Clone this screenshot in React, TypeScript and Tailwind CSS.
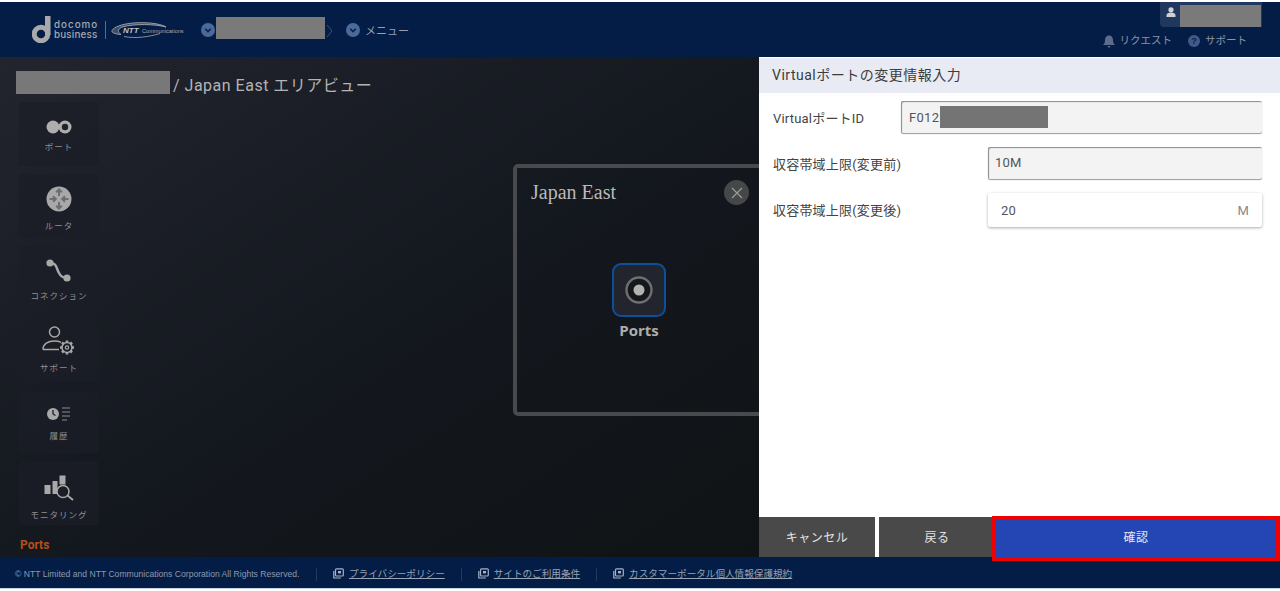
import React from "react";

const jp = "font-['Roboto','Noto_Sans_CJK_JP',sans-serif]";

function Check({ className = "" }: { className?: string }) {
  return (
    <svg viewBox="0 0 14 14" className={`w-[14px] h-[14px] shrink-0 ${className}`}>
      <circle cx="7" cy="7" r="7" fill="#4a6a9a" />
      <path d="M4.2 5.8 7 8.6l2.8-2.8" fill="none" stroke="#0b2148" strokeWidth="1.6" />
    </svg>
  );
}

function ExtIcon() {
  return (
    <svg viewBox="0 0 11 11" className="w-[11px] h-[11px] shrink-0">
      <rect x="2.5" y="0.8" width="7.8" height="7.2" rx="1" fill="none" stroke="#a9b1bf" strokeWidth="1.2" />
      <path d="M0.8 3v7h7" fill="none" stroke="#a9b1bf" strokeWidth="1.2" />
      <rect x="5" y="3" width="3" height="2.4" fill="#a9b1bf" />
    </svg>
  );
}

function Card({ h, mb, icon, label, iconTop, labelMb }: { h: number; mb: number; icon: React.ReactNode; label: string; iconTop: number; labelMb: number }) {
  return (
    <div
      className="w-[80px] rounded-[3px] bg-[#1b1e26]/70 flex flex-col items-center"
      style={{ height: h, marginBottom: mb, paddingTop: iconTop }}
    >
      {icon}
      <span className="mt-auto text-[8.5px] leading-[12px] tracking-[1px] text-[#8e9094] whitespace-nowrap" style={{ marginBottom: labelMb }}>{label}</span>
    </div>
  );
}

const PortIcon = (
  <svg viewBox="0 0 26 14" className="w-[26px] h-[14px]">
    <circle cx="7" cy="7" r="6.5" fill="#aeaeae" />
    <circle cx="19" cy="7" r="6.5" fill="#aeaeae" />
    <circle cx="19" cy="7" r="3.2" fill="#20232b" />
  </svg>
);
const RouterIcon = (
  <svg viewBox="0 0 26 26" className="w-[26px] h-[26px]">
    <circle cx="13" cy="13" r="12.5" fill="#a8a8a8" />
    <g fill="none" stroke="#6b6d71" strokeWidth="2">
      <path d="M13 3.500v6.500M10.200 6.300 13 3.500l2.800 2.800" />
      <path d="M13 22.500V16M10.200 19.700 13 22.500l2.800-2.800" />
      <path d="M3.500 13H10M7 10.200 9.800 13 7 15.800" />
      <path d="M22.500 13H16M19 10.200 16.200 13l2.800 2.800" />
    </g>
  </svg>
);
const ConnIcon = (
  <svg viewBox="0 0 26 24" className="w-[26px] h-[24px]">
    <path d="M4 4c7 0 6 5 9 10 2 4 4 5 8 5" fill="none" stroke="#a8a8a8" strokeWidth="2.4" />
    <circle cx="4" cy="4" r="3.6" fill="#a8a8a8" />
    <circle cx="21" cy="19" r="3.6" fill="#a8a8a8" />
  </svg>
);
const SupportIcon = (
  <svg viewBox="0 0 34 30" className="w-[34px] h-[30px]">
    <g fill="none" stroke="#a8a8a8" strokeWidth="1.5">
      <circle cx="12.500" cy="6" r="5" />
      <path d="M1 23.500c0-5.500 5-8.500 11.500-8.500 2.500 0 4.800.4 6.500 1.300M1 23.500h16" />
      <circle cx="25" cy="21.500" r="5" strokeWidth="1.500" />
      <circle cx="25" cy="21.500" r="1.700" strokeWidth="1.200" />
      <path d="M25 14.500v2.200M25 26.300v2.200M18 21.500h2.200M29.800 21.500H32M20 16.500l1.600 1.600M28.400 24.900l1.600 1.600M20 26.500l1.600-1.600M28.400 18.100l1.600-1.600" strokeWidth="2.600" />
    </g>
  </svg>
);
const HistoryIcon = (
  <svg viewBox="0 0 24 14" className="w-[24px] h-[14px]">
    <circle cx="6" cy="7" r="6" fill="#a8a8a8" />
    <path d="M6 3v4l2.500 1.500" fill="none" stroke="#1b1e26" strokeWidth="1.300" />
    <path d="M15 1h8M15 5h8M15 9h8M15 13h5" stroke="#8d8d8d" strokeWidth="1" />
  </svg>
);
const MonitorIcon = (
  <svg viewBox="0 0 30 26" className="w-[30px] h-[26px]">
    <rect x="0.500" y="10" width="6" height="9" fill="#a8a8a8" />
    <rect x="8.500" y="6" width="5" height="13" fill="#a8a8a8" />
    <rect x="15.500" y="0.500" width="6" height="9" fill="#a8a8a8" />
    <circle cx="19" cy="16.500" r="6" fill="#1b1e26" stroke="#a8a8a8" strokeWidth="1.500" />
    <path d="m23.500 20.500 5.500 4.500" stroke="#a8a8a8" strokeWidth="1.800" />
  </svg>
);

export default function App() {
  return (
    <div className={`relative w-[1280px] h-[591px] overflow-hidden bg-white flex flex-col pt-[2px] ${jp}`}>
      {/* header */}
      <header className="h-[55px] shrink-0 bg-[#031d47] flex items-start relative">
        <div className="flex items-center pl-[32px] pt-[14px] h-[41px]">
          <svg viewBox="0 0 20 27" className="w-[20px] h-[27px]">
            <rect x="13" y="0" width="5.500" height="19" fill="#a9a9a9" />
            <circle cx="9" cy="18" r="6.800" fill="none" stroke="#a9a9a9" strokeWidth="5" />
          </svg>
          <div className="ml-[2px] w-[44px] flex flex-col font-['Inter',sans-serif] text-[9.800px] leading-[10px] font-medium text-[#a9a9a9]">
            <span className="tracking-[1px]">docomo</span>
            <span className="tracking-[0.200px]">business</span>
          </div>
          <div className="ml-[7px] w-px h-[18px] bg-[#596b88]" />
          <div className="relative ml-[5px] w-[74px] h-[18px]">
            <svg viewBox="0 0 74 18" className="w-[74px] h-[18px]">
              <path d="M1 9.500C6 2 30 0 46 3c4 .8 7 1.800 9 3C44 3 24 2.500 11 6 7 8 6 11 10 13.500 4 13 0 11.500 1 9.500Z" fill="#a9a9a9" fillOpacity="0.350" stroke="#a9a9a9" strokeWidth="0.900" />
              <path d="M13 15.500c12 2.500 26 0 36-3" fill="none" stroke="#a9a9a9" strokeWidth="0.800" />
            </svg>
            <span className="absolute left-[12px] top-[5px] text-[8px] leading-[9px] italic font-bold text-[#c4c4c4] font-['Liberation_Sans',sans-serif]">NTT</span>
            <span className="absolute left-[31px] top-[6px] text-[5.600px] leading-[8px] text-[#a9a9a9] font-['Liberation_Sans',sans-serif]">Communications</span>
          </div>
        </div>
        <div className="flex items-start h-[22px] mt-[15px] ml-[16px]">
          <Check className="mt-[6px]" />
          <div className="w-[109px] h-[22px] ml-px bg-[#7a7a7a]" />
          <svg viewBox="0 0 7 14" className="w-[7px] h-[14px] ml-px mt-[7px]">
            <path d="m1 1 5 6-5 6" fill="none" stroke="#3d4f6e" strokeWidth="1" />
          </svg>
          <Check className="ml-[13px] mt-[6px]" />
          <span className="ml-[5px] mt-[7px] text-[11px] leading-[16px] text-[#96a0b0]">メニュー</span>
        </div>
        <div className="ml-auto mr-[18px] flex flex-col items-end">
          <div className="w-[102px] h-[25px] bg-[#20375f] rounded-bl-[4px] flex items-start pt-[3px]">
            <svg viewBox="0 0 10 10" className="w-[10px] h-[10px] ml-[6px] mt-[2px]">
              <circle cx="5" cy="2.800" r="2.600" fill="#d0d0d0" />
              <path d="M0.500 10V8c0-1.500 2-2.500 4.500-2.500S9.500 6.500 9.500 8v2Z" fill="#d0d0d0" />
            </svg>
            <div className="w-[81px] h-[22px] ml-[4px] bg-[#7a7a7a]" />
          </div>
          <div className="flex items-center mt-[6px] mr-[15px] text-[10.500px] leading-[16px] text-[#8a94a6]">
            <svg viewBox="0 0 12 13" className="w-[12px] h-[13px]">
              <path d="M6 0.500c-2.500 0-4 1.800-4 4.500 0 2.500-.6 3.500-2 5h12c-1.400-1.500-2-2.500-2-5 0-2.700-1.500-4.500-4-4.500Z" fill="#5b6d8b" />
              <path d="M4.500 11a1.500 1.500 0 0 0 3 0Z" fill="#5b6d8b" />
            </svg>
            <span className="ml-[5px]">リクエスト</span>
            <svg viewBox="0 0 12 12" className="w-[12px] h-[12px] ml-[16px]">
              <circle cx="6" cy="6" r="6" fill="#3f5a8a" />
              <text x="6" y="9.200" textAnchor="middle" fontSize="9" fontWeight="700" fill="#0b2148" fontFamily="Liberation Sans">?</text>
            </svg>
            <span className="ml-[5px]">サポート</span>
          </div>
        </div>
      </header>

      {/* main */}
      <main className="flex-1 min-h-0 flex">
        <section className="w-[759px] shrink-0 overflow-hidden bg-gradient-to-br from-[#23252e] via-[#14181f] to-[#101315] flex flex-col">
          <div className="flex items-start h-[23px] mt-[14px] ml-[16px] shrink-0">
            <div className="w-[154px] h-[23px] bg-[#787878]" />
            <span className="ml-[3px] mt-[3px] text-[16px] leading-[23px] tracking-[0.500px] text-[#b4b4b4] whitespace-nowrap">/ Japan East エリアビュー</span>
          </div>
          <div className="flex flex-1 min-h-0 mt-[8px]">
            <div className="w-[80px] ml-[19px] shrink-0 relative">
              <Card h={64} mb={8} iconTop={18} labelMb={13} icon={PortIcon} label="ポート" />
              <Card h={64} mb={8} iconTop={12} labelMb={6} icon={RouterIcon} label="ルータ" />
              <Card h={64} mb={8} iconTop={13} labelMb={8} icon={ConnIcon} label="コネクション" />
              <Card h={64} mb={10} iconTop={8} labelMb={8} icon={SupportIcon} label="サポート" />
              <Card h={61} mb={8} iconTop={15} labelMb={11} icon={HistoryIcon} label="履歴" />
              <Card h={64} mb={13} iconTop={14} labelMb={4} icon={MonitorIcon} label="モニタリング" />
              <div className="ml-[1px] text-[12px] leading-[14px] font-bold text-[#b4501a]">Ports</div>
            </div>
            <div className="ml-[414px] mt-[62px] w-[260px] h-[252px] shrink-0 border-4 border-[#484a4d] rounded-[5px] relative">
              <div className="absolute left-[14px] top-[11px] font-['Liberation_Serif',serif] text-[20px] leading-[26px] text-[#b9b9b9]">Japan East</div>
              <div className="absolute left-[207px] top-[12px] w-[25px] h-[25px] rounded-full bg-[#454749] flex items-center justify-center">
                <svg viewBox="0 0 12 12" className="w-[12px] h-[12px]">
                  <path d="m1 1 10 10M11 1 1 11" stroke="#9c9c9c" strokeWidth="1.200" />
                </svg>
              </div>
              <div className="absolute left-[95px] top-[95px] w-[54px] flex flex-col items-center">
                <div className="w-[54px] h-[54px] rounded-[9px] border-2 border-[#0c4f9c] bg-[#22252e] flex items-center justify-center">
                  <svg viewBox="0 0 28 28" className="w-[28px] h-[28px]">
                    <circle cx="14" cy="14" r="12.500" fill="#14171c" stroke="#6f6f6f" strokeWidth="2.400" />
                    <circle cx="14" cy="14" r="5.500" fill="#b2b2b2" />
                  </svg>
                </div>
                <span className="mt-[3px] text-[15px] leading-[20px] font-bold text-[#adadad] font-['Open_Sans',sans-serif]">Ports</span>
              </div>
            </div>
          </div>
        </section>

        {/* panel */}
        <aside className="flex-1 min-w-0 bg-white flex flex-col">
          <div className="h-[35px] mt-px shrink-0 bg-[#e8ebf4] flex items-center pl-[13px] text-[14px] text-[#3c3c3c] tracking-[0.500px]">
            Virtualポートの変更情報入力
          </div>
          <div className="pl-[14px] pr-[18px] pt-[8px] flex-1 text-[13px] text-[#444] tracking-[0.200px]">
            <div className="flex items-center justify-between h-[32px]">
              <span className="pt-[3px]">VirtualポートID</span>
              <div className="w-[361px] h-[32px] rounded-[2px] bg-[#f3f3f3] shadow-[inset_1px_1px_1px_#8a8a8a,0_1px_1px_#999] flex items-center pl-[8px] text-[#555]">
                <span className="pt-[1px] tracking-[0.300px]">F012</span>
                <div className="w-[108px] h-[22px] ml-[1px] bg-[#747474]" />
              </div>
            </div>
            <div className="flex items-center justify-between h-[32px] mt-[14px]">
              <span className="pt-[3px]">収容帯域上限(変更前)</span>
              <div className="w-[274px] h-[32px] rounded-[2px] bg-[#f3f3f3] shadow-[inset_1px_1px_1px_#8a8a8a,0_1px_1px_#999] flex items-center pl-[7px] text-[#555]">10M</div>
            </div>
            <div className="flex items-center justify-between h-[34px] mt-[14px]">
              <span className="pt-[2px]">収容帯域上限(変更後)</span>
              <div className="w-[274px] h-[34px] rounded-[2px] bg-white shadow-[0_1px_3px_#aaa] flex items-center justify-between pl-[13px] pr-[13px] pt-[2px] text-[#555]">
                <span>20</span>
                <span className="text-[#888]">M</span>
              </div>
            </div>
          </div>
          <div className="h-[40px] shrink-0 flex text-[12px] text-[#e4e4e4] tracking-[0.500px]">
            <div className="w-[116px] bg-[#494949] flex items-center justify-center pt-px">キャンセル</div>
            <div className="w-[113px] ml-[4px] pl-[3px] bg-[#494949] flex items-center justify-center pt-px">戻る</div>
            <div className="flex-1 bg-[#2346b4] flex items-center justify-center pt-px text-[#e6e9f5]">確認</div>
          </div>
        </aside>
      </main>

      {/* footer */}
      <footer className="h-[31px] shrink-0 mb-[3px] bg-[#031d47] flex items-center pl-[15px] pt-[3px] text-[9.600px] text-[#98a2b3] whitespace-nowrap">
        <span className="font-['Liberation_Sans',sans-serif] text-[8.600px] text-[#8f99aa] w-[285px]">© NTT Limited and NTT Communications Corporation All Rights Reserved.</span>
        <div className="w-px h-[13px] bg-[#22395f] ml-[16px]" />
        <div className="ml-[16px] flex items-center"><ExtIcon /><span className="ml-[5px] underline">プライバシーポリシー</span></div>
        <div className="w-px h-[13px] bg-[#22395f] ml-[16px]" />
        <div className="ml-[16px] flex items-center"><ExtIcon /><span className="ml-[5px] underline">サイトのご利用条件</span></div>
        <div className="w-px h-[13px] bg-[#22395f] ml-[16px]" />
        <div className="ml-[16px] flex items-center"><ExtIcon /><span className="ml-[5px] underline">カスタマーポータル個人情報保護規約</span></div>
      </footer>
      <div className="absolute left-0 right-0 bottom-[2px] h-px bg-[#c9d3e4]" />

      {/* annotation */}
      <div className="absolute left-[992px] top-[516px] w-[288px] h-[45px] border-4 border-[#f00000]" />
    </div>
  );
}
